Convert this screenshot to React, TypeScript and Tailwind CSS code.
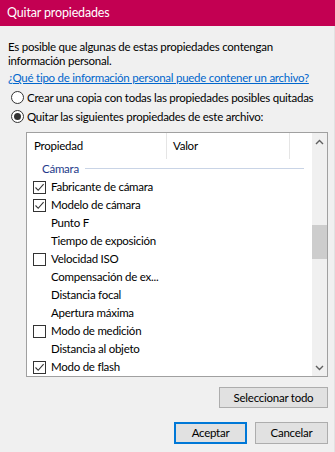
import React from "react";

type Row = { label: string; check?: boolean; checked?: boolean };

const rows: Row[] = [
  { label: "Fabricante de cámara", check: true, checked: true },
  { label: "Modelo de cámara", check: true, checked: true },
  { label: "Punto F" },
  { label: "Tiempo de exposición" },
  { label: "Velocidad ISO", check: true },
  { label: "Compensación de ex..." },
  { label: "Distancia focal" },
  { label: "Apertura máxima" },
  { label: "Modo de medición", check: true },
  { label: "Distancia al objeto" },
  { label: "Modo de flash", check: true, checked: true },
];

function CheckBox({ checked }: { checked?: boolean }) {
  return (
    <span className="flex h-[13px] w-[13px] items-center justify-center border border-[#333333] bg-white">
      {checked && (
        <svg width="11" height="11" viewBox="0 0 11 11">
          <path d="M1.5 5.5 L4.2 8.3 L9.6 2.2" fill="none" stroke="#333333" strokeWidth="1.1" />
        </svg>
      )}
    </span>
  );
}

function Radio({ checked }: { checked?: boolean }) {
  return (
    <span className="flex h-[13px] w-[13px] shrink-0 items-center justify-center rounded-full border border-[#333333] bg-white">
      {checked && <span className="h-[7px] w-[7px] rounded-full bg-[#333333]" />}
    </span>
  );
}

export default function App() {
  return (
    <div
      className="flex h-[452px] w-[335px] flex-col overflow-hidden whitespace-nowrap bg-[#f0f0f0] text-[11.5px] tracking-[-0.25px] text-black"
      style={{ fontFamily: "Lato, 'Noto Sans', sans-serif" }}
    >
      <div className="flex h-[26px] shrink-0 items-center bg-[#c30052] pl-[7px] text-[12.5px] tracking-[-0.15px] text-white">
        Quitar propiedades
      </div>

      <div className="flex flex-1 flex-col border-r border-[#e2e2e2] pr-[6px]">
        <p className="pl-[8px] pt-[14px] leading-[14px]">
          Es posible que algunas de estas propiedades contengan
          <br />
          información personal.
        </p>
        <a className="ml-[8px] mt-[3px] leading-[14px] text-[#0066cc] underline">
          ¿Qué tipo de información personal puede contener un archivo?
        </a>

        <div className="mt-[3px] flex h-[19px] items-center gap-[3px] pl-[11px]">
          <Radio />
          <span>Crear una copia con todas las propiedades posibles quitadas</span>
        </div>
        <div className="flex h-[19px] items-center gap-[3px] pl-[11px]">
          <Radio checked />
          <span>Quitar las siguientes propiedades de este archivo:</span>
        </div>

        <div className="ml-[26px] mt-[6px] flex h-[245px] border border-[#a0a0a0] bg-white">
          <div className="flex flex-1 flex-col overflow-hidden">
            <div className="flex h-[26px] shrink-0 items-stretch">
              <div className="flex w-[140px] items-center border-r border-[#e5e5e5] pl-[7px]">Propiedad</div>
              <div className="flex w-[123px] items-center border-r border-[#e5e5e5] pl-[6px]">Valor</div>
            </div>
            <div className="flex h-[19px] shrink-0 items-center gap-[6px] pl-[15px] pr-[8px]">
              <span className="text-[#1e3a8a]">Cámara</span>
              <span className="h-px flex-1 bg-[#c9d4e6]" />
            </div>
            {rows.map((r) => (
              <div key={r.label} className="flex h-[18px] shrink-0 items-center pl-[6px]">
                <span className="w-[18px]">{r.check && <CheckBox checked={r.checked} />}</span>
                <span>{r.label}</span>
              </div>
            ))}
          </div>
          <div className="flex w-[15px] shrink-0 flex-col bg-[#f0f0f0]">
            <div className="flex h-[17px] items-center justify-center">
              <svg width="9" height="6" viewBox="0 0 9 6">
                <path d="M1 5 L4.5 1.5 L8 5" fill="none" stroke="#606060" strokeWidth="1.4" />
              </svg>
            </div>
            <div className="mt-[75px] h-[34px] bg-[#cdcdcd]" />
            <div className="flex-1" />
            <div className="flex h-[17px] items-center justify-center">
              <svg width="9" height="6" viewBox="0 0 9 6">
                <path d="M1 1 L4.5 4.5 L8 1" fill="none" stroke="#606060" strokeWidth="1.4" />
              </svg>
            </div>
          </div>
        </div>

        <div className="mt-[10px] flex justify-end">
          <button className="h-[21px] w-[109px] border border-[#adadad] bg-[#e1e1e1]">Seleccionar todo</button>
        </div>
        <div className="mt-[14px] flex justify-end gap-[8px]">
          <button className="h-[22px] w-[73px] border-2 border-[#0078d7] bg-[#e1e1e1]">Aceptar</button>
          <button className="h-[22px] w-[73px] border border-[#adadad] bg-[#e1e1e1]">Cancelar</button>
        </div>
      </div>
    </div>
  );
}
